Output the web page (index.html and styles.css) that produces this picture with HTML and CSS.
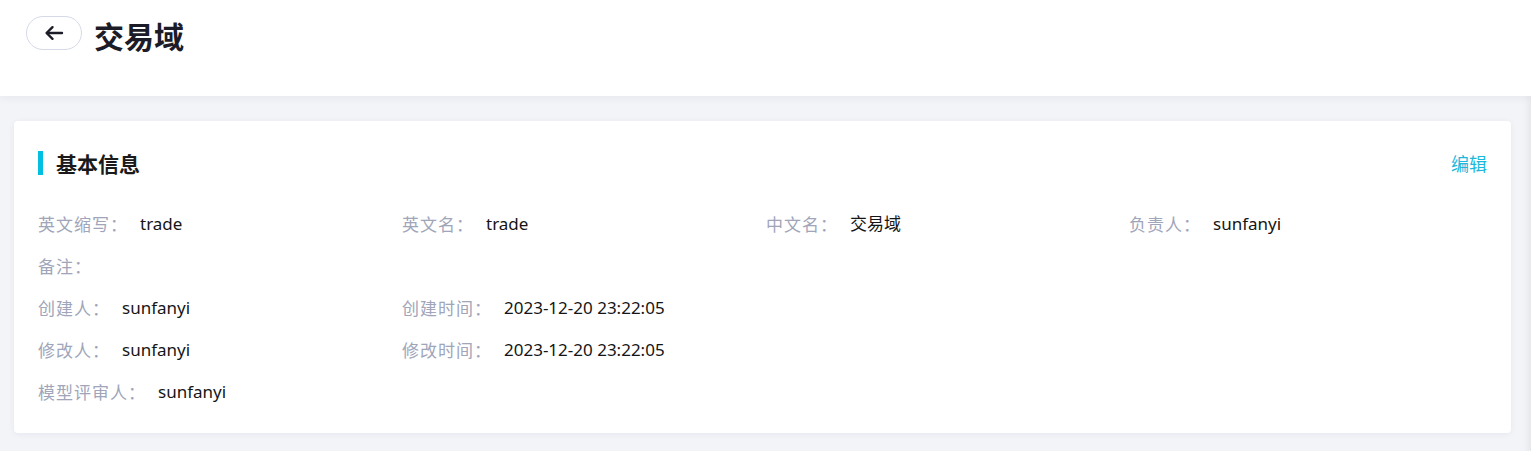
FILE: index.html
```html
<!DOCTYPE html>
<html lang="zh-CN">
<head>
<meta charset="utf-8">
<title>交易域</title>
<link rel="stylesheet" href="styles.css">
</head>
<body>
<div class="page">
  <header class="topbar">
    <button class="back-btn" type="button" aria-label="返回">
      <svg width="20" height="16" viewBox="0 0 20 16" fill="none" stroke="#1c1c28" stroke-width="2.4" stroke-linecap="round" stroke-linejoin="round">
        <path d="M18 8H3"/>
        <path d="M8.5 2.2L2.6 8l5.9 5.8"/>
      </svg>
    </button>
    <h1 class="title">交易域</h1>
  </header>
  <main class="content">
    <section class="card">
      <div class="card-head">
        <h2 class="section-title">基本信息</h2>
        <a class="edit-link" href="#">编辑</a>
      </div>
      <div class="info-grid">
        <div class="item"><span class="label">英文缩写：</span><span class="value">trade</span></div>
        <div class="item"><span class="label">英文名：</span><span class="value">trade</span></div>
        <div class="item"><span class="label">中文名：</span><span class="value">交易域</span></div>
        <div class="item"><span class="label">负责人：</span><span class="value">sunfanyi</span></div>

        <div class="item full"><span class="label">备注：</span><span class="value"></span></div>

        <div class="item"><span class="label">创建人：</span><span class="value">sunfanyi</span></div>
        <div class="item span3"><span class="label">创建时间：</span><span class="value">2023-12-20 23:22:05</span></div>

        <div class="item"><span class="label">修改人：</span><span class="value">sunfanyi</span></div>
        <div class="item span3"><span class="label">修改时间：</span><span class="value">2023-12-20 23:22:05</span></div>

        <div class="item full"><span class="label">模型评审人：</span><span class="value">sunfanyi</span></div>
      </div>
    </section>
  </main>
</div>
</body>
</html>
```

FILE: styles.css
```css
* { box-sizing: border-box; }

html, body {
  margin: 0;
  padding: 0;
  height: 100%;
}

body {
  background: #f3f4f8;
  font-family: "Noto Sans", "Noto Sans CJK SC", sans-serif;
  color: #1a1a1a;
  overflow: hidden;
}

.page {
  min-height: 451px;
  box-shadow: inset -10px 0 8px -8px rgba(0, 0, 0, 0.07);
}

.topbar {
  height: 96px;
  background: #ffffff;
  display: flex;
  align-items: flex-start;
  padding: 16px 0 0 26px;
  gap: 12px;
  box-shadow: 0 2px 8px rgba(20, 30, 60, 0.06);
  position: relative;
  z-index: 1;
}

.back-btn {
  width: 56px;
  height: 34px;
  border: 1px solid #d6d9e8;
  border-radius: 17px;
  background: #ffffff;
  display: flex;
  align-items: center;
  justify-content: center;
  padding: 0;
  cursor: pointer;
}

.title {
  margin: 0;
  font-family: "Noto Sans CJK SC", sans-serif;
  font-size: 30px;
  font-weight: 700;
  line-height: 38px;
  color: #1c1c28;
}

.content {
  padding: 25px 20px 18px 14px;
}

.card {
  background: #ffffff;
  border-radius: 4px;
  box-shadow: 0 1px 6px rgba(20, 30, 60, 0.06);
  padding: 30px 24px 21px 24px;
  height: 312px;
}

.card-head {
  display: flex;
  justify-content: space-between;
  align-items: center;
  height: 24px;
}

.section-title {
  margin: 0;
  font-family: "Noto Sans CJK SC", sans-serif;
  font-size: 21px;
  font-weight: 700;
  line-height: 24px;
  color: #1a1a1a;
  border-left: 5px solid #00bfe0;
  padding-left: 13px;
}

.edit-link {
  font-family: "Noto Sans CJK SC", sans-serif;
  font-size: 18px;
  color: #1cb8db;
  text-decoration: none;
  line-height: 24px;
}

.info-grid {
  margin-top: 28px;
  display: grid;
  grid-template-columns: 364px 364px 363px 1fr;
  grid-auto-rows: 42px;
}

.item {
  display: flex;
  align-items: center;
  font-size: 17px;
  line-height: 42px;
  white-space: nowrap;
}

.full { grid-column: 1 / -1; }
.span3 { grid-column: 2 / -1; }

.label {
  font-family: "Noto Sans CJK SC", sans-serif;
  color: #a0a5ba;
  letter-spacing: 1px;
  margin-right: 12px;
}

.value {
  color: #151515;
  font-family: "Noto Sans", "Noto Sans CJK SC", sans-serif;
}
```
